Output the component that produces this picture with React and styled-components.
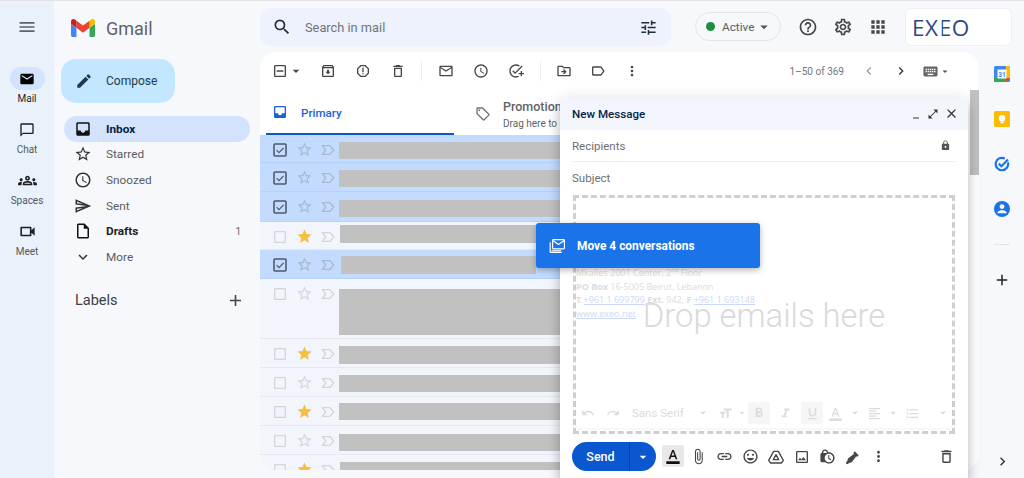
import React from "react";
import styled, { createGlobalStyle } from "styled-components";
import {
  MdMenu, MdMail, MdOutlineChatBubbleOutline, MdOutlineGroups, MdOutlineVideocam, MdCreate, MdStarBorder, MdStar,
  MdAccessTime, MdOutlineSend, MdOutlineInsertDriveFile, MdExpandMore, MdAdd, MdSearch, MdTune, MdHelpOutline, MdOutlineSettings,
  MdApps, MdOutlineArchive, MdOutlineReport, MdOutlineDelete, MdMailOutline, MdOutlineAddTask, MdOutlineDriveFileMove, MdOutlineLabel,
  MdMoreVert, MdChevronLeft, MdChevronRight, MdKeyboard, MdArrowDropDown, MdCheckBoxOutlineBlank,
  MdOutlineLocalOffer, MdLock, MdClose, MdOpenInFull, MdMinimize, MdUndo, MdRedo, MdFormatSize, MdFormatBold, MdFormatItalic,
  MdFormatUnderlined, MdFormatColorText, MdFormatAlignLeft, MdFormatListBulleted, MdAttachFile, MdLink, MdOutlineInsertEmoticon,
  MdOutlineImage, MdLockClock, MdOutlineIndeterminateCheckBox,
} from "react-icons/md";

const Global = createGlobalStyle`
  html, body { margin: 0; padding: 0; background: #f6f8fc; }
  body { font-family: Roboto, "Liberation Sans", sans-serif; overflow: hidden; }
  * { box-sizing: border-box; }
`;

const Page = styled.div`
  position: relative; width: 1024px; height: 478px; overflow: hidden;
  display: flex; border-top: 1px solid #e2e4e8; background: #f6f8fc;
`;
const Rail = styled.nav`
  width: 54px; flex: none; background: #e9f1fb; display: flex; flex-direction: column; align-items: center;
`;
const Burger = styled.div`
  height: 52px; padding-top: 16px; color: #5f6368; display: flex; justify-content: center; margin-bottom: 14px;
`;
const RailItem = styled.div`
  height: 51px; display: flex; flex-direction: column; align-items: center;
  font-size: 10px; line-height: 12px; padding-top: 0; color: ${p => p.$active ? "#1f1f1f" : "#55585a"};
`;
const RailIcon = styled.div`
  width: 35px; height: 23px; border-radius: 12px; display: flex; align-items: center; justify-content: center;
  color: ${p => p.$active ? "#000" : "#1f1f1f"}; background: ${p => p.$active ? "#d3e3fd" : "transparent"}; margin-bottom: 3px;
`;
const Sidebar = styled.aside`
  width: 206px; flex: none; display: flex; flex-direction: column;
`;
const Brand = styled.div`
  height: 58px; padding: 18px 0 0 17px; display: flex; gap: 11px; color: #5f6368; font-size: 18px; line-height: 20px;
`;
const Compose = styled.div`
  width: 114px; height: 44px; margin-left: 7px; border-radius: 15px; background: #c2e7ff; display: flex; align-items: center;
  padding-left: 14px; gap: 13px; font-size: 12px; color: #1f3a4d;
`;
const NavList = styled.div`
  margin-top: 13px; margin-left: 10px; width: 186px; display: flex; flex-direction: column;
`;
const NavItem = styled.div`
  height: 25.6px; border-radius: 13px; display: flex; align-items: center; padding: 0 8px 0 10px; gap: 14px;
  font-size: 11.8px; color: ${p => p.$active ? "#041e49" : p.$bold ? "#1f1f1f" : "#5a5d60"};
  font-weight: ${p => p.$active || p.$bold ? 700 : 400};
  background: ${p => p.$active ? "#d3e3fd" : "transparent"};
  svg { color: ${p => p.$active || p.$bold ? "#111" : "#333"}; flex: none; }
`;
const Count = styled.span`
  margin-left: auto; font-size: 10px; font-weight: 400; color: #666; padding-right: 1px;
`;
const LabelsHead = styled.div`
  margin: 21px 0 0 21px; width: 170px; display: flex; align-items: center; justify-content: space-between;
  font-size: 14.5px; color: #3c4043; svg { color: #444; }
`;
const Main = styled.div`
  flex: 1; display: flex; flex-direction: column; min-width: 0;
`;
const Header = styled.header`
  height: 51px; flex: none; padding-top: 7px; display: flex; align-items: flex-start;
`;
const Search = styled.div`
  width: 411px; height: 38px; border-radius: 10px; background: #edf2fc; display: flex; align-items: center;
  padding: 0 13px 0 12px; color: #70757a; font-size: 12.8px; svg { flex: none; color: #1f2d3d; }
`;
const SearchText = styled.span`
  margin-left: 13px; flex: 1;
`;
const StatusPill = styled.div`
  margin: 4px 0 0 24px; width: 86px; height: 29px; border: 1px solid #e3e5e8; border-radius: 15px; display: flex; align-items: center;
  padding-left: 10px; font-size: 11.8px; color: #5a5d60; svg { color: #555; }
`;
const Dot = styled.i`
  width: 9px; height: 9px; border-radius: 50%; background: #1e8e3e; margin-right: 7px; flex: none;
`;
const HeadIcons = styled.div`
  margin: 7px 0 0 9px; display: flex; color: #444746;
`;
const HeadIcon = styled.div`
  width: 35px; height: 24px; display: flex; align-items: center; justify-content: center;
`;
const LogoBox = styled.div`
  margin-left: 10px; width: 107px; height: 38px; border-radius: 6px; background: #fff; border: 1px solid #edeff2; padding-left: 6px;
  display: flex; align-items: center; font-family: "Open Sans", sans-serif; font-weight: 400; font-size: 22.5px; letter-spacing: .6px; color: #2a4b82;
`;
const BarsE = styled.span`
  display: inline-block; clip-path: inset(0 0 0 3px);
`;
const Body = styled.div`
  flex: 1; display: flex; min-height: 0;
`;
const Panel = styled.section`
  position: relative; width: 719px; height: 418px; flex: none; background: #fff; border-radius: 16px; overflow: hidden;
  display: flex; flex-direction: column;
`;
const Toolbar = styled.div`
  height: 45px; flex: none; display: flex; align-items: center; padding: 0 0 7px 12px; color: #444746;
`;
const Slot = styled.div`
  width: ${p => p.$w || 35}px; height: 24px; flex: none; display: flex; align-items: center; justify-content: center;
  color: ${p => p.$c || "inherit"}; margin-left: ${p => p.$ml || 0}px;
`;
const Sep = styled.div`
  width: ${p => p.$w || 13}px; height: 20px; flex: none; display: flex; justify-content: center;
  &::before { content: ""; width: 1px; background: #eceef1; }
`;
const Pager = styled.div`
  margin-left: auto; display: flex; align-items: center; font-size: 10px; color: #70757a; padding-right: 28px;
`;
const Tabs = styled.div`
  height: 38px; flex: none; display: flex; padding-left: 6px;
`;
const TabActive = styled.div`
  width: 188px; height: 38px; display: flex; align-items: flex-start; padding: 7px 0 0 6px; gap: 13px; border-bottom: 2px solid #0b57d0;
  color: #1a62d6; font-size: 11.6px; line-height: 18px; font-weight: 500;
`;
const Tab = styled.div`
  margin-left: 21px; padding-top: 2px; display: flex; gap: 12px; color: #5f6368; svg { margin-top: 7px; color: #70757a; flex: none; }
`;
const TabTitle = styled.div`
  font-size: 12.5px; font-weight: 500; line-height: 16px; white-space: nowrap;
`;
const TabSub = styled.div`
  font-size: 10px; line-height: 14px; margin-top: 2px; white-space: nowrap;
`;
const List = styled.div`
  flex: 1; overflow: hidden; background: #f2f6fc;
`;
const Row = styled.div`
  height: ${p => p.$h}px; display: flex; align-items: flex-start; padding-left: 11px;
  background: ${p => p.$sel ? "#c2dbff" : "#f2f6fc"}; border-bottom: 1px solid ${p => p.$sel ? "#b6d2fa" : "#e6eaf0"};
`;
const Controls = styled.div`
  width: 68px; height: 29px; flex: none; display: flex; align-items: center;
`;
const Block = styled.div`
  width: ${p => p.$w}px; height: ${p => p.$bh}px; margin-top: ${p => p.$t}px; margin-left: ${p => p.$l}px; background: #c1c1c1; flex: none;
`;
const SideRail = styled.aside`
  width: 45px; flex: none; display: flex; flex-direction: column; align-items: center; padding: 13px 0 0 1px;
`;
const SideIcon = styled.div`
  height: 45px; display: flex; align-items: flex-start; justify-content: center; padding-top: 1px; flex: none;
`;
const SideDivider = styled.div`
  width: 16px; height: 1px; background: #e2e4e8; margin: -1px 0 25px;
`;
const SideEnd = styled.div`
  margin-top: auto; padding-bottom: 8px; color: #333; display: flex;
`;
const ScrollTrack = styled.div`
  position: absolute; right: 0; top: 38px; bottom: 0; width: 11px; background: #fff; display: flex; justify-content: flex-end;
`;
const ScrollThumb = styled.div`
  width: 9px; height: 85px; background: #c1c1c1;
`;
const Win = styled.section`
  position: absolute; left: 560px; top: 96px; width: 408px; height: 382px; background: #fff; border-radius: 8px 8px 0 0;
  box-shadow: 0 8px 10px 1px rgba(0,0,0,.14), 0 3px 14px 2px rgba(0,0,0,.12); display: flex; flex-direction: column;
`;
const WinHead = styled.div`
  height: 33px; flex: none; background: #f2f6fc; border-radius: 8px 8px 0 0; display: flex; align-items: center; padding: 0 9px 0 12px;
  font-size: 11.6px; font-weight: 500; color: #041e49;
`;
const WinCtl = styled.div`
  margin-left: auto; display: flex; align-items: center; gap: 5px; color: #333;
`;
const Field = styled.div`
  height: 32px; margin: 0 12px; flex: none; display: flex; align-items: center; justify-content: space-between; font-size: 11.5px;
  color: #6d6f72; border-bottom: ${p => p.$line ? "1px solid #eceef0" : "0"}; padding-right: 5px; svg { color: #555; }
`;
const Zone = styled.div`
  position: relative; margin: 1px 13px 0 13px; height: 239px; flex: none; border: 3px dashed #cfcfcf;
`;
const Signature = styled.div`
  position: absolute; left: 0; top: 68px; font-family: "Open Sans", sans-serif; font-size: 9px; line-height: 13.6px; color: #dcdcdc; white-space: nowrap;
  b { font-weight: 700; } sup { font-size: 6px; line-height: 0; } u { color: #cdd8f8; }
`;
const DropText = styled.div`
  position: absolute; left: 0; right: 0; top: 99px; text-align: center; font-family: Roboto, sans-serif; font-size: 32.8px; line-height: 38px; color: #d9d9d9; font-weight: 300;
`;
const Fmt = styled.div`
  position: absolute; left: 0; right: 0; bottom: 3px; height: 30px; display: flex; align-items: center; color: #d6d6d6; background: #fff;
  box-shadow: 0 1px 2px rgba(0,0,0,.06); font-size: 11.5px;
`;
const FmtItem = styled.div`
  width: ${p => p.$w}px; height: 22px; flex: none; display: flex; align-items: center; justify-content: ${p => p.$start ? "flex-start" : "center"};
  background: ${p => p.$on ? "#f6f6f6" : "transparent"}; border-radius: 2px; white-space: nowrap; padding-left: ${p => p.$start ? 6 : 0}px; color: #dcdcdc;
`;
const WinFoot = styled.div`
  flex: 1; display: flex; align-items: flex-start; padding: 8px 0 0 12px; color: #444746;
`;
const Send = styled.div`
  width: 84px; height: 29px; border-radius: 15px; background: #0b57d0; color: #fff; display: flex; align-items: center; flex: none;
  font-size: 12.5px; font-weight: 500; margin-right: 6px;
`;
const SendLabel = styled.span`
  width: 58px; text-align: center; border-right: 1px solid #0842a0; line-height: 29px;
`;
const SendCaret = styled.span`
  width: 26px; display: flex; justify-content: center;
`;
const FootBtn = styled.div`
  width: ${p => p.$w || 25.7}px; height: ${p => p.$on ? 22 : 29}px; margin-top: ${p => p.$on ? 3 : 0}px; flex: none; display: flex; align-items: center; justify-content: center;
  background: ${p => p.$on ? "#e8e8e8" : "transparent"}; border-radius: 2px; color: ${p => p.$on ? "#111" : "#444746"}; margin-left: ${p => p.$ml || 0}px;
`;
const Chip = styled.div`
  position: absolute; left: 536px; top: 222px; width: 224px; height: 45px; border-radius: 3px; background: #1a73e8; color: #fff;
  box-shadow: 0 2px 6px rgba(0,0,0,.3); display: flex; align-items: center; padding-left: 13px; gap: 12px; font-size: 11.9px; font-weight: 700;
`;

const GmailLogo = () => (
  <svg width="24" height="18" viewBox="52 42 88 66">
    <path fill="#4285f4" d="M58 108h14V74L52 59v43c0 3.32 2.69 6 6 6" />
    <path fill="#34a853" d="M120 108h14c3.32 0 6-2.69 6-6V59l-20 15" />
    <path fill="#fbbc04" d="M120 48v26l20-15v-8c0-7.42-8.47-11.65-14.4-7.2" />
    <path fill="#ea4335" d="M72 74V48l24 18 24-18v26L96 92" />
    <path fill="#c5221f" d="M52 51v8l20 15V48l-5.6-4.2c-5.94-4.45-14.4-.22-14.4 7.2" />
  </svg>
);
const InboxIcon = ({ size = 18 }) => (
  <svg width={size} height={size} viewBox="0 0 24 24" fill="currentColor">
    <path fillRule="evenodd" d="M5 3h14c1.1 0 2 .9 2 2v14c0 1.1-.9 2-2 2H5c-1.1 0-2-.9-2-2V5c0-1.1.9-2 2-2zm0 2v9h4c0 1.7 1.3 3 3 3s3-1.3 3-3h4V5z" />
  </svg>
);
const ImportantIcon = () => (
  <svg width="16" height="16" viewBox="0 0 24 24" fill="none" stroke="currentColor" strokeWidth="2" strokeLinejoin="round">
    <path d="M3.5 5.5H15l5.5 6.5-5.5 6.5H3.5L8.5 12z" />
  </svg>
);
const CheckedBox = () => (
  <svg width="14" height="14" viewBox="0 0 14 14" fill="none" stroke="currentColor">
    <rect x="1" y="1" width="12" height="12" rx="1" strokeWidth="1.6" />
    <path d="M3.6 7.2l2.4 2.4 4.6-4.8" strokeWidth="1.2" />
  </svg>
);
const CalendarIcon = () => (
  <svg width="16" height="16" viewBox="0 0 16 16">
    <rect x="0" y="0" width="16" height="16" rx="1.5" fill="#4285f4" />
    <rect x="12" y="0" width="4" height="12" fill="#fbbc04" />
    <rect x="0" y="12" width="12" height="4" fill="#34a853" />
    <path d="M12 12h4l-4 4z" fill="#ea4335" />
    <rect x="3.5" y="3.5" width="9" height="9" fill="#fff" />
    <text x="8" y="11" textAnchor="middle" fontSize="6.5" fontWeight="700" fill="#4285f4" fontFamily="Roboto">31</text>
  </svg>
);
const KeepIcon = () => (
  <svg width="16" height="16" viewBox="0 0 16 16">
    <rect width="16" height="16" rx="1.5" fill="#fbbc04" />
    <circle cx="8" cy="7.2" r="3.2" fill="#fff" />
    <rect x="6.4" y="10.6" width="3.2" height="1.6" fill="#fff" />
  </svg>
);
const TasksIcon = () => (
  <svg width="16" height="16" viewBox="0 0 16 16" fill="none">
    <path d="M13.9 6.4A6.2 6.2 0 1 1 10.9 2.6" stroke="#1a73e8" strokeWidth="2.2" />
    <path d="M4.8 7.6l2.6 2.6L14 3.4" stroke="#1a73e8" strokeWidth="2.2" />
  </svg>
);
const ContactsIcon = () => (
  <svg width="16" height="16" viewBox="0 0 16 16">
    <circle cx="8" cy="8" r="8" fill="#1a73e8" />
    <circle cx="8" cy="5.6" r="2.4" fill="#fff" />
    <path d="M3.4 11.6c.6-1.8 3-2.4 4.6-2.4s4 .6 4.6 2.4v.6H3.4z" fill="#fff" />
  </svg>
);
const DriveIcon = () => (
  <svg width="16" height="16" viewBox="0 0 24 24" fill="none" stroke="#444746" strokeWidth="2" strokeLinejoin="round">
    <path d="M8.5 3.5h7L23 17l-3 4H4l-3-4z" />
    <path d="M12 8.5 8 16h8z" />
  </svg>
);
const PenIcon = () => (
  <svg width="16" height="16" viewBox="0 0 24 24" fill="#444746">
    <path d="M14.5 3.5l6 6-2.4 2.4-1.2-1.2-6.9 9.2-3.6 1.1L3 23l-2-2 2.5-3.2 1-3.7 9.2-6.8-1.2-1.2z" />
  </svg>
);
const StackMail = () => (
  <svg width="16" height="14" viewBox="0 0 16 14" fill="none" stroke="#fff" strokeWidth="1.2">
    <rect x="3.6" y=".6" width="11.8" height="9.2" rx=".8" />
    <path d="M3.8 1.4 9.5 5.6l5.7-4.2" />
    <path d="M1.2 3.2v9.6c0 .3.2.6.6.6h11" />
    <path d="M2.6 11.8H12" />
  </svg>
);

const rows = [
  { h: 28, sel: 1, t: 7, bh: 17, l: 0 },
  { h: 29, sel: 1, t: 7, bh: 17, l: 0 },
  { h: 30, sel: 1, t: 8, bh: 17, l: 0 },
  { h: 28, star: 1, t: 3, bh: 18, l: 1 },
  { h: 29, sel: 1, t: 6, bh: 18, l: 2, w: 195 },
  { h: 60, t: 10, bh: 46, l: 0 },
  { h: 29, star: 1, t: 7, bh: 18, l: 0 },
  { h: 29, t: 7, bh: 17, l: 0 },
  { h: 29, star: 1, t: 6, bh: 17, l: 0 },
  { h: 29, t: 8, bh: 17, l: 0 },
  { h: 20, star: 1, t: 7, bh: 8, l: 1 },
];

const nav = [
  { label: "Inbox", Icon: InboxIcon, active: true },
  { label: "Starred", Icon: MdStarBorder },
  { label: "Snoozed", Icon: MdAccessTime },
  { label: "Sent", Icon: MdOutlineSend },
  { label: "Drafts", Icon: MdOutlineInsertDriveFile, bold: true, count: 1 },
  { label: "More", Icon: MdExpandMore },
];

export default function App() {
  return (
    <>
      <Global />
      <Page>
        <Rail>
          <Burger><MdMenu size={20} /></Burger>
          <RailItem $active><RailIcon $active><MdMail size={16} /></RailIcon>Mail</RailItem>
          <RailItem><RailIcon><MdOutlineChatBubbleOutline size={16} /></RailIcon>Chat</RailItem>
          <RailItem><RailIcon><MdOutlineGroups size={19} /></RailIcon>Spaces</RailItem>
          <RailItem><RailIcon><MdOutlineVideocam size={19} /></RailIcon>Meet</RailItem>
        </Rail>
        <Sidebar>
          <Brand><GmailLogo />Gmail</Brand>
          <Compose><MdCreate size={18} />Compose</Compose>
          <NavList>
            {nav.map(({ label, Icon, active, bold, count }) => (
              <NavItem key={label} $active={active} $bold={bold}>
                <Icon size={18} />{label}{count ? <Count>{count}</Count> : null}
              </NavItem>
            ))}
          </NavList>
          <LabelsHead>Labels<MdAdd size={19} /></LabelsHead>
        </Sidebar>
        <Main>
          <Header>
            <Search><MdSearch size={20} /><SearchText>Search in mail</SearchText><MdTune size={19} /></Search>
            <StatusPill><Dot />Active<MdArrowDropDown size={18} /></StatusPill>
            <HeadIcons>
              <HeadIcon><MdHelpOutline size={20} /></HeadIcon>
              <HeadIcon><MdOutlineSettings size={20} /></HeadIcon>
              <HeadIcon><MdApps size={20} /></HeadIcon>
            </HeadIcons>
            <LogoBox>EX<BarsE>E</BarsE>O</LogoBox>
          </Header>
          <Body>
            <Panel>
              <Toolbar>
                <Slot $w={16}><MdOutlineIndeterminateCheckBox size={18} /></Slot>
                <Slot $w={16}><MdArrowDropDown size={16} /></Slot>
                <Slot $ml={6}><MdOutlineArchive size={16} /></Slot>
                <Slot><MdOutlineReport size={16} /></Slot>
                <Slot><MdOutlineDelete size={16} /></Slot>
                <Sep />
                <Slot><MdMailOutline size={16} /></Slot>
                <Slot><MdAccessTime size={16} /></Slot>
                <Slot><MdOutlineAddTask size={16} /></Slot>
                <Sep $w={14} />
                <Slot $w={34}><MdOutlineDriveFileMove size={16} /></Slot>
                <Slot $w={34}><MdOutlineLabel size={16} /></Slot>
                <Slot $w={33}><MdMoreVert size={16} /></Slot>
                <Pager>
                  1–50 of 369
                  <Slot $w={32} $ml={9} $c="#9aa0a6"><MdChevronLeft size={16} /></Slot>
                  <Slot $w={32} $c="#333"><MdChevronRight size={16} /></Slot>
                  <Slot $w={18} $ml={4} $c="#666"><MdKeyboard size={17} /></Slot>
                  <Slot $w={12} $c="#555"><MdArrowDropDown size={15} /></Slot>
                </Pager>
              </Toolbar>
              <Tabs>
                <TabActive><InboxIcon size={16} />Primary</TabActive>
                <Tab>
                  <MdOutlineLocalOffer size={16} />
                  <div><TabTitle>Promotions</TabTitle><TabSub>Drag here to</TabSub></div>
                </Tab>
              </Tabs>
              <List>
                {rows.map((r, i) => (
                  <Row key={i} $h={r.h} $sel={r.sel}>
                    <Controls>
                      <Slot $w={18} $c={r.sel ? "#4d5a6e" : "#d2d5d9"}>
                        {r.sel ? <CheckedBox /> : <MdCheckBoxOutlineBlank size={16} />}
                      </Slot>
                      <Slot $w={24} $ml={3} $c={r.star ? "#f6bf3f" : r.sel ? "#a9b8cf" : "#d2d5d9"}>
                        {r.star ? <MdStar size={17} /> : <MdStarBorder size={17} />}
                      </Slot>
                      <Slot $w={24} $c={r.sel ? "#a9b8cf" : "#d2d5d9"}><ImportantIcon /></Slot>
                    </Controls>
                    <Block $w={r.w || 240} $bh={r.bh} $t={r.t} $l={r.l} />
                  </Row>
                ))}
              </List>
              <ScrollTrack><ScrollThumb /></ScrollTrack>
            </Panel>
            <SideRail>
              <SideIcon><CalendarIcon /></SideIcon>
              <SideIcon><KeepIcon /></SideIcon>
              <SideIcon><TasksIcon /></SideIcon>
              <SideIcon><ContactsIcon /></SideIcon>
              <SideDivider />
              <SideIcon><MdAdd size={18} color="#222" /></SideIcon>
              <SideEnd><MdChevronRight size={17} /></SideEnd>
            </SideRail>
          </Body>
        </Main>
        <Win>
          <WinHead>
            New Message
            <WinCtl><MdMinimize size={12} /><MdOpenInFull size={12} /><MdClose size={15} /></WinCtl>
          </WinHead>
          <Field $line>Recipients<MdLock size={11} /></Field>
          <Field>Subject</Field>
          <Zone>
            <Signature>
              Mkalles 2001 Center, 2<sup>nd</sup> Floor<br />
              <b>PO Box</b> 16-5005 Beirut, Lebanon<br />
              <b>T</b> <u>+961 1 699799</u> <b>Ext.</b> 942, <b>F</b> <u>+961 1 693148</u><br />
              <u>www.exeo.net</u>
            </Signature>
            <DropText>Drop emails here</DropText>
            <Fmt>
              <FmtItem $w={24}><MdUndo size={14} /></FmtItem>
              <FmtItem $w={26}><MdRedo size={14} /></FmtItem>
              <FmtItem $w={68} $start>Sans Serif</FmtItem>
              <FmtItem $w={18}><MdArrowDropDown size={14} /></FmtItem>
              <FmtItem $w={24} $start><MdFormatSize size={15} /></FmtItem>
              <FmtItem $w={12}><MdArrowDropDown size={14} /></FmtItem>
              <FmtItem $w={22} $on><MdFormatBold size={16} /></FmtItem>
              <FmtItem $w={31}><MdFormatItalic size={15} /></FmtItem>
              <FmtItem $w={22} $on><MdFormatUnderlined size={15} /></FmtItem>
              <FmtItem $w={25}><MdFormatColorText size={15} /></FmtItem>
              <FmtItem $w={14}><MdArrowDropDown size={14} /></FmtItem>
              <FmtItem $w={24}><MdFormatAlignLeft size={15} /></FmtItem>
              <FmtItem $w={14}><MdArrowDropDown size={14} /></FmtItem>
              <FmtItem $w={24}><MdFormatListBulleted size={15} /></FmtItem>
              <FmtItem $w={38}><MdArrowDropDown size={14} /></FmtItem>
            </Fmt>
          </Zone>
          <WinFoot>
            <Send><SendLabel>Send</SendLabel><SendCaret><MdArrowDropDown size={16} /></SendCaret></Send>
            <FootBtn $w={22} $on><MdFormatColorText size={16} /></FootBtn>
            <FootBtn $ml={2}><MdAttachFile size={17} /></FootBtn>
            <FootBtn><MdLink size={17} /></FootBtn>
            <FootBtn><MdOutlineInsertEmoticon size={17} /></FootBtn>
            <FootBtn><DriveIcon /></FootBtn>
            <FootBtn><MdOutlineImage size={16} /></FootBtn>
            <FootBtn><MdLockClock size={17} /></FootBtn>
            <FootBtn><PenIcon /></FootBtn>
            <FootBtn><MdMoreVert size={17} /></FootBtn>
            <FootBtn $ml={42}><MdOutlineDelete size={17} /></FootBtn>
          </WinFoot>
        </Win>
        <Chip><StackMail />Move 4 conversations</Chip>
      </Page>
    </>
  );
}
